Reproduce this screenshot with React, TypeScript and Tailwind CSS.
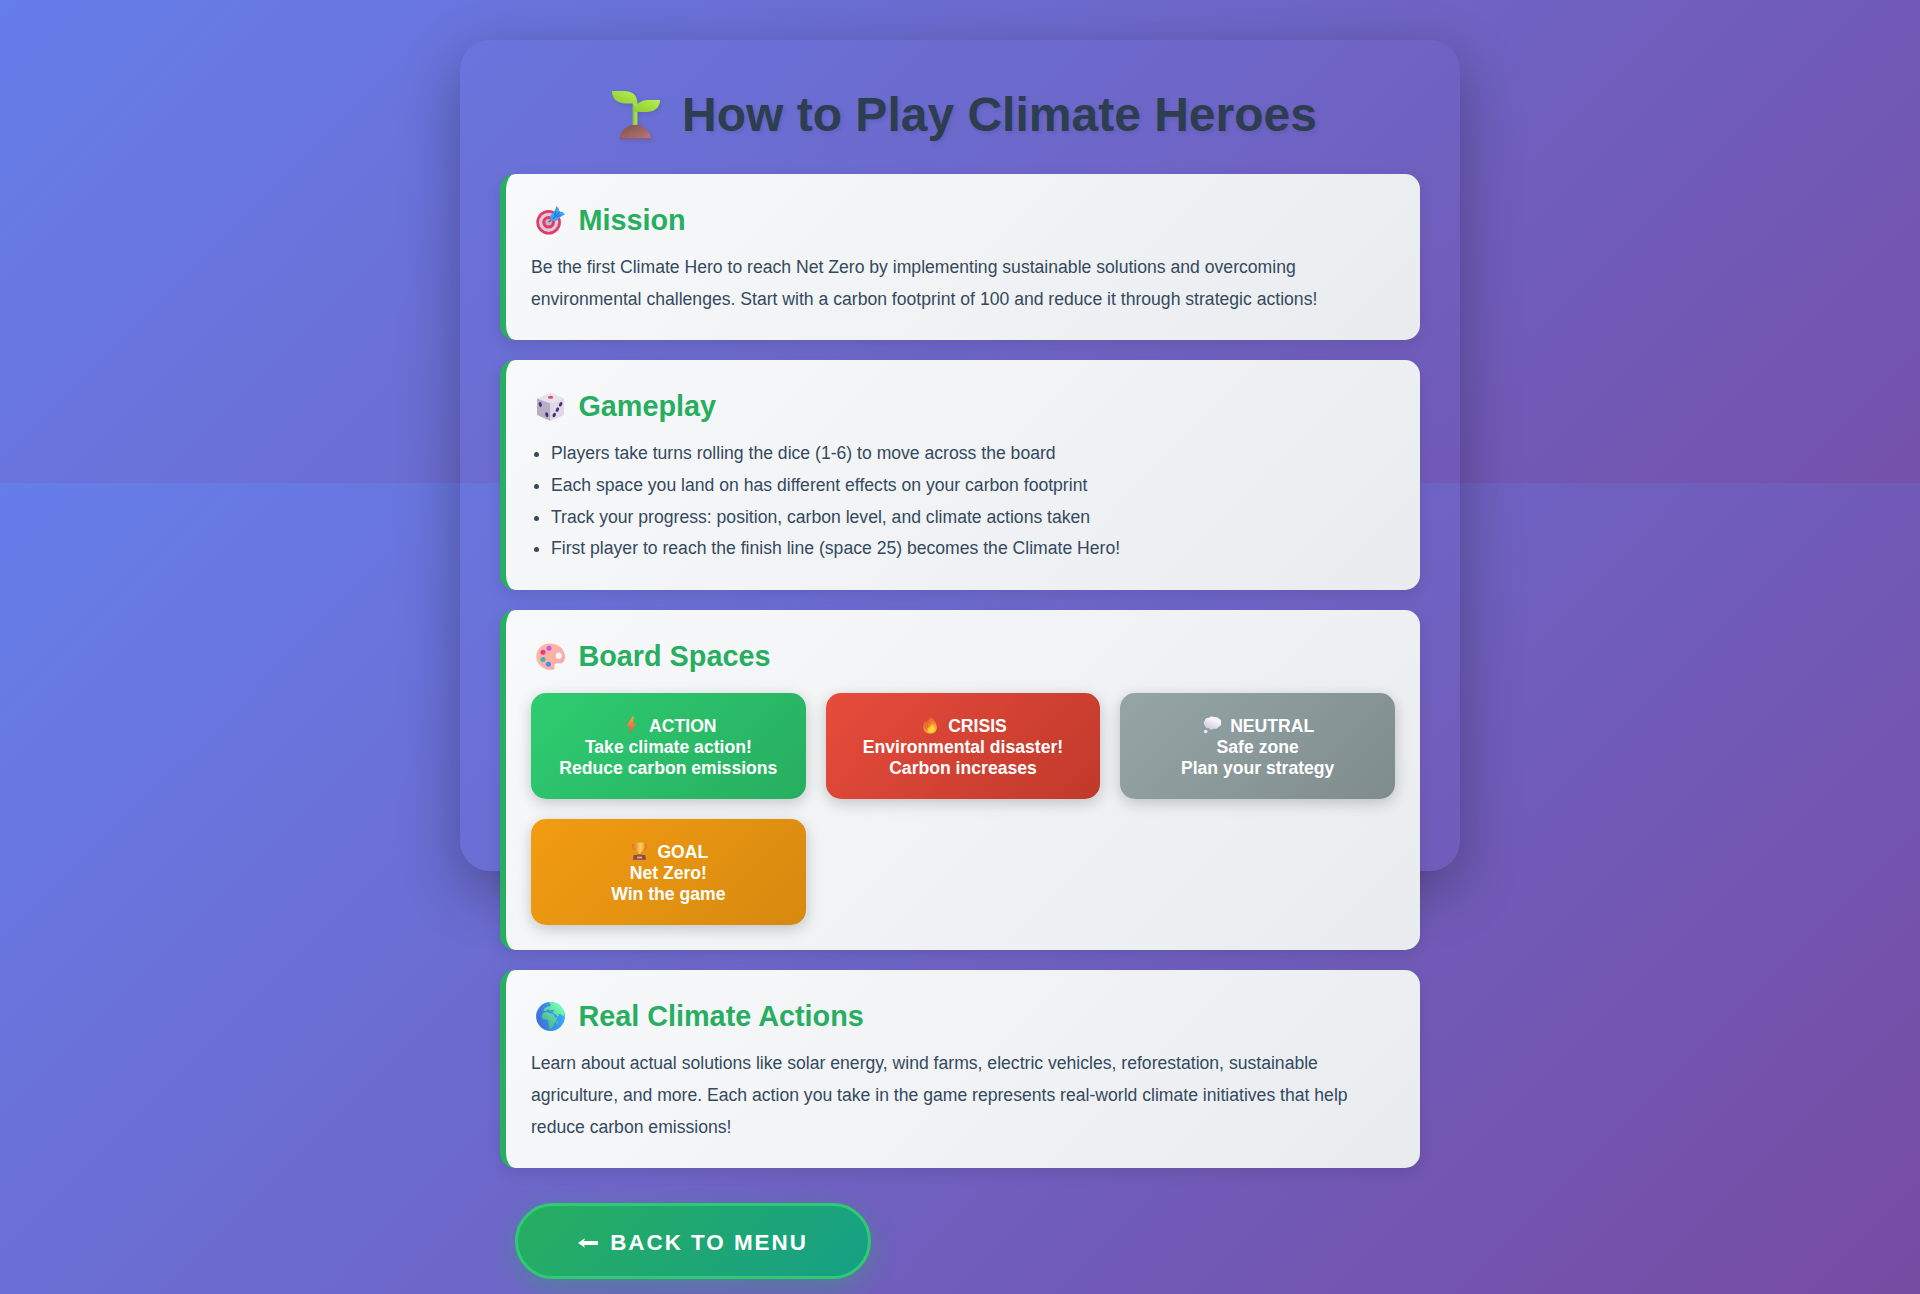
import type { ReactNode } from "react";

function Seedling() {
  return (
    <svg viewBox="0 0 48 48" className="ml-[2px] h-12 w-12 shrink-0 drop-shadow-[2px_2px_2px_rgba(0,0,0,0.1)]">
      <defs>
        <linearGradient id="leaf" x1="0" y1="1" x2="1" y2="0">
          <stop offset="0" stopColor="#8ecb2e" />
          <stop offset="1" stopColor="#b8f053" />
        </linearGradient>
        <linearGradient id="soil" x1="0" y1="0" x2="1" y2="1">
          <stop offset="0" stopColor="#7d5048" />
          <stop offset="1" stopColor="#b8797a" />
        </linearGradient>
      </defs>
      <rect x="20.8" y="11" width="4.6" height="23" fill="#a2e04c" />
      <rect x="20.8" y="14" width="1.6" height="19" fill="#84c341" />
      <path d="M0 0h12c8 0 13.4 4 13.4 12.4H14C5 12.400 0 8 0 0Z" fill="url(#leaf)" />
      <path d="M48 9H37c-8.500 0-14.500 4-14.500 12H34c9 0 14-4.500 14-12Z" fill="url(#leaf)" />
      <path d="M7.500 48a15.800 15.500 0 0 1 31.500 0Z" fill="url(#soil)" />
      <path d="M7.500 47.200h31.500v.8H7.500Z" fill="#a34f63" />
    </svg>
  );
}

function Target() {
  return (
    <svg viewBox="0 0 29 29" className="ml-[5px] h-[29px] w-[29px] shrink-0">
      <circle cx="12.600" cy="16.300" r="12.300" fill="#e33b62" />
      <circle cx="12.600" cy="16.300" r="9.600" fill="#dccbe0" />
      <circle cx="12.600" cy="16.300" r="6.300" fill="#e33b62" />
      <circle cx="12.600" cy="16.300" r="3.200" fill="#cdb4cf" />
      <path d="M12.600 16.300 19 10" stroke="#6b5872" strokeWidth="1.500" />
      <path d="M14.500 14.800V9.500L18.500 5 20.500 0l2.300 2.800L23 6l3.200-.2L29 8.300 24.500 11l-4.300 4Z" fill="#3fa4f2" />
      <path d="m17 12.800 7-7.300M19.800 5.500l-1.300 4M24.500 9l-4 2" stroke="#2474dc" strokeWidth="1.200" fill="none" />
    </svg>
  );
}

function Dice() {
  return (
    <svg viewBox="0 0 29 29" className="ml-[5px] h-[29px] w-[29px] shrink-0">
      <path d="M14.500 0.500 28 6.500 14.500 12 1 6.500Z" fill="#e7e3ea" />
      <path d="M1 6.500 14.500 11.500V29L1 23Z" fill="#b9aec6" />
      <path d="M28 6.500 14.500 11.500V29L28 23Z" fill="#e0d9e8" />
      <ellipse cx="14.500" cy="5.300" rx="2.700" ry="1.500" fill="#e8496a" />
      <g fill="#46307a">
        <ellipse cx="4.300" cy="12.500" rx="1.500" ry="2.500" transform="rotate(-15 4.300 12.500)" />
        <ellipse cx="10.800" cy="22.700" rx="1.500" ry="2.500" transform="rotate(-15 10.800 22.700)" />
        <ellipse cx="24.600" cy="12.300" rx="1.500" ry="2.400" transform="rotate(25 24.600 12.300)" />
        <ellipse cx="21.400" cy="17.600" rx="1.500" ry="2.300" transform="rotate(25 21.400 17.600)" />
        <ellipse cx="18.200" cy="23" rx="1.500" ry="2.400" transform="rotate(25 18.200 23)" />
      </g>
    </svg>
  );
}

function Palette() {
  return (
    <svg viewBox="0 0 29 29" className="ml-[5px] h-[29px] w-[29px] shrink-0">
      <defs>
        <linearGradient id="wood" x1="0" y1="0" x2="1" y2="1">
          <stop offset="0" stopColor="#ffb9a0" />
          <stop offset="1" stopColor="#f7a9ab" />
        </linearGradient>
      </defs>
      <path
        fillRule="evenodd"
        d="M14 1.500C6 1.500 .3 7.300 .3 14.500.3 22 7 28 15.500 28c2.300 0 3.500-1.200 3-3-.5-2.200.3-3.700 3-3.700h3c3 0 4.500-2.500 4.500-6C29 7 22.500 1.500 14 1.500ZM22.700 10.600a3 3.200 0 1 1 0 6.400 3 3.200 0 0 1 0-6.400Z"
        fill="url(#wood)"
      />
      <circle cx="13" cy="6.300" r="2.500" fill="#bd58e8" />
      <circle cx="7" cy="10.300" r="2.500" fill="#ee358c" />
      <circle cx="7" cy="17.500" r="2.500" fill="#3cb3bd" />
      <circle cx="12.400" cy="22.200" r="2.500" fill="#3f8ff0" />
    </svg>
  );
}

function Globe() {
  return (
    <svg viewBox="0 0 29 29" className="ml-[5px] h-[29px] w-[29px] shrink-0">
      <defs>
        <linearGradient id="sea" x1="0" y1="0.600" x2="1" y2="0.300">
          <stop offset="0" stopColor="#416cd6" />
          <stop offset="1" stopColor="#2fb4fb" />
        </linearGradient>
        <linearGradient id="land" gradientUnits="userSpaceOnUse" x1="6" y1="22" x2="24" y2="3">
          <stop offset="0" stopColor="#45a98e" />
          <stop offset="1" stopColor="#76ffb0" />
        </linearGradient>
        <clipPath id="disc">
          <circle cx="14.500" cy="14.500" r="14.400" />
        </clipPath>
      </defs>
      <circle cx="14.500" cy="14.500" r="14.400" fill="url(#sea)" />
      <g clipPath="url(#disc)" fill="url(#land)">
        <path d="M14 0 13.500 1.800 15 2.500 14 4.500 11.500 4.500 8.500 6.500 7.300 8.800 9.500 9.200 11.500 7.800 13 7.500 14.500 9.200 15 8 17 7.800 18 9.300 16.500 10 17.500 11.300 20 12.500 21.500 14.800 23 13.800 22.500 12 25 12.300 26.500 14.500 29 12V0Z" />
        <path d="M7.500 10.800 11 9.800l2.500 1.400 4 .8 1.500 3.500 2.300.3-1.600 3.700-1.700 2-.5 2.500-2.500 3.200-1.700-.5-1-4.500v-3.500l-1.300-1.200-3.500.2-2-2.500.5-2.700Z" />
        <path d="m21 19.500 1 .3-.8 2.500-1-.5Z" />
      </g>
    </svg>
  );
}

function Bolt() {
  return (
    <svg viewBox="0 0 23 20" className="h-5 w-[23px]">
      <defs>
        <linearGradient id="bolt" x1="0" y1="0" x2="0" y2="1">
          <stop offset="0" stopColor="#fba63c" />
          <stop offset="1" stopColor="#e8504c" />
        </linearGradient>
      </defs>
      <path d="M12.500 1.500 6.200 11h3.600L9.500 18.700 16 8.800h-3.300L14 1.500Z" fill="url(#bolt)" />
    </svg>
  );
}

function Flame() {
  return (
    <svg viewBox="0 0 23 20" className="h-5 w-[23px]">
      <defs>
        <linearGradient id="fire" x1="0.200" y1="0" x2="0.700" y2="1">
          <stop offset="0" stopColor="#e8472f" />
          <stop offset="0.500" stopColor="#f6822f" />
          <stop offset="1" stopColor="#ffc933" />
        </linearGradient>
      </defs>
      <path d="M11 1.500c2 1 6.800 5.500 6.800 11 0 3.700-2.600 6-6.400 6-4.200 0-7.200-2.300-7.200-6.500C4.200 9.500 5 7 6.500 5c-.2 1.800 0 2.500.5 3 1-3 4.500-3.500 4-6.500Z" fill="url(#fire)" />
      <path d="M13 9c1.500 1.500 2.800 3.200 2.500 5.500-.3 2-1.600 3.200-3.300 3.200s-3-1.200-3-3C9.200 12.500 12.500 12 13 9Z" fill="#ffd23a" />
      <path d="M6 9c.2 3 .8 5 2 6.500M9.500 7C8.200 9 8 11 8.600 13" stroke="#dd5a25" strokeWidth=".8" fill="none" />
    </svg>
  );
}

function Thought() {
  return (
    <svg viewBox="0 0 23 20" className="h-5 w-[23px]">
      <defs>
        <linearGradient id="puff" x1="0.800" y1="0" x2="0.200" y2="1">
          <stop offset="0.300" stopColor="#f7f3f8" />
          <stop offset="1" stopColor="#cfc3dc" />
        </linearGradient>
      </defs>
      <path d="M8 2.800c1.500-1.500 4-1.500 5.300-.6 2-.8 4 0 4.500 1.500 2 .4 2.800 2.300 2.200 4.300.4 2-.6 3.500-2.300 3.800-1 2-3.200 2.400-4.700 1.800-1.500 1.500-4 1.500-5-.4-2.200.6-3.800-.6-4-2.700C2.300 9.500 2.300 6.800 3.800 5.800c.2-2 2-3.300 4.200-3Z" fill="url(#puff)" />
      <circle cx="4.700" cy="16.600" r="1.800" fill="#ece6f1" />
    </svg>
  );
}

function Trophy() {
  return (
    <svg viewBox="0 0 23 20" className="h-5 w-[23px]">
      <defs>
        <linearGradient id="cup" x1="0" y1="0" x2="1" y2="0">
          <stop offset="0" stopColor="#e8863a" />
          <stop offset="0.600" stopColor="#ffd152" />
          <stop offset="1" stopColor="#f3a53d" />
        </linearGradient>
      </defs>
      <path d="M7.500 3.500H4.700c-.4 3 .8 5 3.600 5.500M15.500 3.500h2.800c.4 3-.8 5-3.600 5.500" stroke="#dc7a38" strokeWidth="1.200" fill="none" />
      <path d="M6.800 1.500h9.400v4.200c0 3-1.500 4.800-3.700 5.300v2.500h-2V11c-2.200-.5-3.700-2.300-3.700-5.300Z" fill="url(#cup)" />
      <path d="M9 13h5v1.500H9Z" fill="#c9682f" />
      <path d="M5.700 14h11.600l.7 4.800H5Z" fill="#8a4a5c" />
      <rect x="9" y="15.600" width="5" height="1.800" fill="#ecaa62" />
    </svg>
  );
}

function Section({ icon, title, children }: { icon: ReactNode; title: string; children: ReactNode }) {
  return (
    <section className="rounded-[15px] border-l-[6px] border-[#27ae60] bg-[linear-gradient(135deg,#f8f9fa,#e9ecef)] p-[25px] text-[17.6px] leading-[31.68px] text-[#34495e] shadow-[0_5px_15px_rgba(0,0,0,0.1)]">
      <h2 className="mb-[15px] flex h-[38px] items-center pt-1 text-[28.8px] font-bold leading-[34px] text-[#27ae60]">
        {icon}
        <span className="ml-[13.4px]">{title}</span>
      </h2>
      {children}
    </section>
  );
}

function Space({ tone, icon, name, lines }: { tone: string; icon: ReactNode; name: string; lines: string[] }) {
  return (
    <div className={`h-[106px] rounded-[15px] p-5 text-center font-bold leading-[21px] text-white shadow-[0_4px_15px_rgba(0,0,0,0.2)] ${tone}`}>
      <div className="flex h-6 items-center justify-center gap-[6px]">
        {icon}
        <span className="mt-0.5">{name}</span>
      </div>
      {lines.map((line) => (
        <div key={line}>{line}</div>
      ))}
    </div>
  );
}

export default function App() {
  return (
    <div className="h-[1294px] overflow-hidden bg-[linear-gradient(135deg,#667eea_0%,#764ba2_100%),linear-gradient(135deg,#667eea_0%,#764ba2_100%)] bg-[length:100%_811px] bg-[position:0_483px,0_0] bg-no-repeat pt-10 font-['Liberation_Sans',Arial,sans-serif]">
      <main className="mx-auto h-[831px] w-[1000px] rounded-[30px] p-10 shadow-[0_20px_60px_rgba(0,0,0,0.3)]">
        <h1 className="mb-[30px] flex h-16 items-center justify-center pl-[7px] pt-[6px] text-5xl font-bold text-[#2c3e50] [text-shadow:2px_2px_4px_rgba(0,0,0,0.1)]">
          <Seedling />
          <span className="ml-[22px]">How to Play Climate Heroes</span>
        </h1>
        <div className="flex flex-col gap-5">
          <Section icon={<Target />} title="Mission">
            <p>
              Be the first Climate Hero to reach Net Zero by implementing sustainable solutions and overcoming environmental
              challenges. Start with a carbon footprint of 100 and reduce it through strategic actions!
            </p>
          </Section>
          <Section icon={<Dice />} title="Gameplay">
            <ul className="list-disc pl-5">
              <li>Players take turns rolling the dice (1-6) to move across the board</li>
              <li>Each space you land on has different effects on your carbon footprint</li>
              <li>Track your progress: position, carbon level, and climate actions taken</li>
              <li>First player to reach the finish line (space 25) becomes the Climate Hero!</li>
            </ul>
          </Section>
          <Section icon={<Palette />} title="Board Spaces">
            <div className="mt-5 grid grid-cols-3 gap-5">
              <Space
                tone="bg-[linear-gradient(135deg,#2ecc71,#27ae60)]"
                icon={<Bolt />}
                name="ACTION"
                lines={["Take climate action!", "Reduce carbon emissions"]}
              />
              <Space
                tone="bg-[linear-gradient(135deg,#e74c3c,#c0392b)]"
                icon={<Flame />}
                name="CRISIS"
                lines={["Environmental disaster!", "Carbon increases"]}
              />
              <Space
                tone="bg-[linear-gradient(135deg,#95a5a6,#7f8c8d)]"
                icon={<Thought />}
                name="NEUTRAL"
                lines={["Safe zone", "Plan your strategy"]}
              />
              <Space
                tone="bg-[linear-gradient(135deg,#f39c12,#d68910)]"
                icon={<Trophy />}
                name="GOAL"
                lines={["Net Zero!", "Win the game"]}
              />
            </div>
          </Section>
          <Section icon={<Globe />} title="Real Climate Actions">
            <p>
              Learn about actual solutions like solar energy, wind farms, electric vehicles, reforestation, sustainable
              agriculture, and more. Each action you take in the game represents real-world climate initiatives that help
              reduce carbon emissions!
            </p>
          </Section>
        </div>
        <button className="ml-[15px] mt-[35px] flex h-[76px] w-[356px] items-center justify-center whitespace-nowrap rounded-full border-[3px] border-[#2ecc71] bg-[linear-gradient(135deg,#27ae60,#16a085)] pt-[3px] text-[22.4px] font-bold tracking-[2px] text-white shadow-[0_8px_25px_rgba(39,174,96,0.4)]">
          <svg viewBox="0 0 20 10" className="mr-3 h-[10px] w-5 fill-white">
            <path d="M0 5 7 0.300 6 3H20v4H6l1 2.700Z" />
          </svg>
          BACK TO MENU
        </button>
      </main>
    </div>
  );
}
